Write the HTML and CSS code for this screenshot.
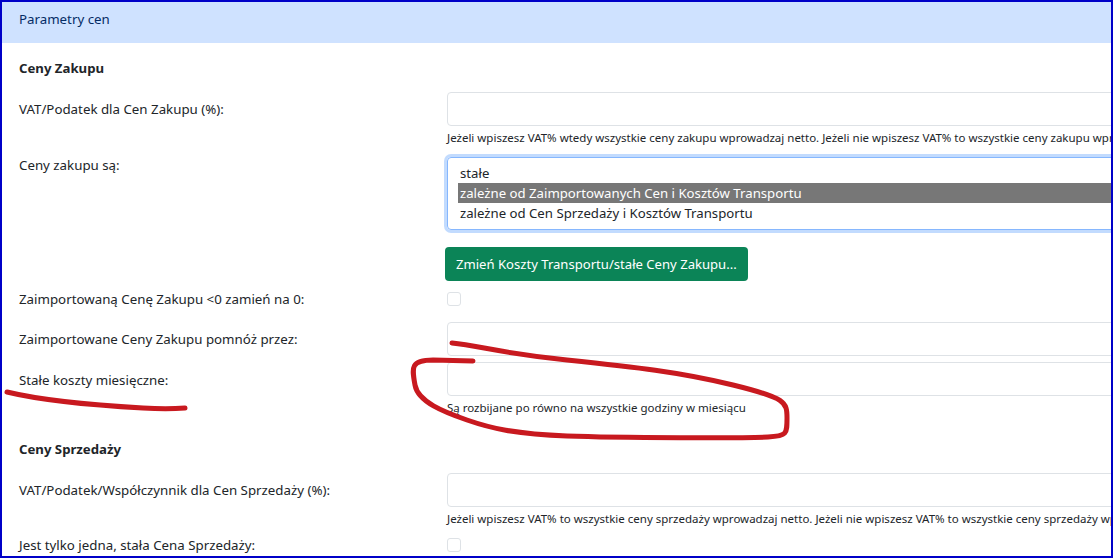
FILE: index.html
```html
<!DOCTYPE html>
<html lang="pl">
<head>
<meta charset="utf-8">
<title>Parametry cen</title>
<link rel="stylesheet" href="styles.css">
</head>
<body>
<div class="frame">
  <div class="card-head">Parametry cen</div>
  <div class="card-body">
    <h6 class="section first">Ceny Zakupu</h6>
    <div class="row r-vat">
      <label class="lbl">VAT/Podatek dla Cen Zakupu (%):</label>
      <div class="ctl"><div class="input"></div><div class="hint">Jeżeli wpiszesz VAT% wtedy wszystkie ceny zakupu wprowadzaj netto. Jeżeli nie wpiszesz VAT% to wszystkie ceny zakupu wprowadzaj brutto.</div></div>
    </div>
    <div class="row r-sel">
      <label class="lbl">Ceny zakupu są:</label>
      <div class="ctl">
        <div class="listbox">
          <div class="opt">stałe</div>
          <div class="opt sel">zależne od Zaimportowanych Cen i Kosztów Transportu</div>
          <div class="opt">zależne od Cen Sprzedaży i Kosztów Transportu</div>
        </div>
        <div class="btn">Zmień Koszty Transportu/stałe Ceny Zakupu...</div>
      </div>
    </div>
    <div class="row r-chk">
      <label class="lbl">Zaimportowaną Cenę Zakupu &lt;0 zamień na 0:</label>
      <div class="ctl"><div class="check"></div></div>
    </div>
    <div class="row r-mul">
      <label class="lbl">Zaimportowane Ceny Zakupu pomnóż przez:</label>
      <div class="ctl"><div class="input"></div></div>
    </div>
    <div class="row r-fix">
      <label class="lbl">Stałe koszty miesięczne:</label>
      <div class="ctl"><div class="input"></div><div class="hint">Są rozbijane po równo na wszystkie godziny w miesiącu</div></div>
    </div>
    <h6 class="section">Ceny Sprzedaży</h6>
    <div class="row r-vat">
      <label class="lbl">VAT/Podatek/Współczynnik dla Cen Sprzedaży (%):</label>
      <div class="ctl"><div class="input"></div><div class="hint">Jeżeli wpiszesz VAT% to wszystkie ceny sprzedaży wprowadzaj netto. Jeżeli nie wpiszesz VAT% to wszystkie ceny sprzedaży wprowadzaj brutto.</div></div>
    </div>
    <div class="row r-chk last">
      <label class="lbl">Jest tylko jedna, stała Cena Sprzedaży:</label>
      <div class="ctl"><div class="check"></div></div>
    </div>
  </div>
</div>
<svg class="marks" width="1113" height="558" viewBox="0 0 1113 558" aria-hidden="true">
  <path d="M7 392C40 400 90 405 143 408C160 409 172 409 185 408" />
  <path d="M452 343C480 346 500 353 567 360S680 372 733 385S787 402 787 418S787 436 768 437S620 438 567 436S490 428 467 420S418 402 415 385S410 360 433 360L473 361" />
</svg>
</body>
</html>
```
FILE: styles.css
```css
html, body { margin: 0; padding: 0; }
body {
  width: 1113px; height: 558px; overflow: hidden; position: relative;
  font-family: "Noto Sans", "Open Sans", sans-serif;
  font-size: 13.3px; color: #212529; background: #fff;
}
.frame {
  box-sizing: border-box; width: 1113px; height: 558px; overflow: hidden;
  border: 2px solid #0000c8;
}
.card-head {
  box-sizing: border-box; height: 41px; padding: 9px 17px 0;
  background: #cfe2ff; color: #052c65; line-height: 17px;
}
.card-body { padding: 0 0 0 17px; }
.section { margin: 0; font-size: 13.2px; font-weight: 700; line-height: 17px; color: #212529; padding-top: 26px; }
.section.first { padding-top: 17px; }
.row { display: flex; }
.lbl { width: 428px; flex: none; line-height: 17px; }
.ctl { flex: none; width: 700px; }
.input { box-sizing: border-box; height: 34px; border: 1px solid #dee2e6; border-radius: 4px; background: #fff; }
.hint { font-size: 11.5px; line-height: 14px; margin-top: 5px; white-space: nowrap; }
.r-vat { padding-top: 15px; }
.r-vat .lbl { padding-top: 9px; }
.r-sel { padding-top: 12px; }
.listbox {
  box-sizing: border-box; height: 73px; border: 1px solid #86b7fe; border-radius: 4px;
  box-shadow: 0 0 0 3px rgba(13,110,253,.25); padding: 5px 0 6px 10px;
}
.opt { height: 20px; line-height: 20px; padding-left: 2px; font-size: 13.2px; white-space: nowrap; }
.opt.sel { background: #777; color: #fff; }
.btn {
  display: inline-block; margin: 17px 0 0 -2px; background: #0b8457; color: #fff;
  border-radius: 4px; padding: 0 11px; height: 34px; line-height: 34px; font-size: 13.1px;
}
.r-chk { padding-top: 10px; }
.r-chk.last { padding-top: 11px; }
.check { box-sizing: border-box; width: 14px; height: 14px; margin-top: 1px; border: 1px solid #dee2e6; border-radius: 3px; }
.r-mul { padding-top: 14px; }
.r-mul .lbl { padding-top: 9px; }
.r-fix { padding-top: 6px; }
.r-fix .lbl { padding-top: 10px; }
.marks { position: absolute; left: 0; top: 0; pointer-events: none; }
.marks path { fill: none; stroke: #c8191f; stroke-width: 5; stroke-linecap: round; stroke-linejoin: round; }
```
